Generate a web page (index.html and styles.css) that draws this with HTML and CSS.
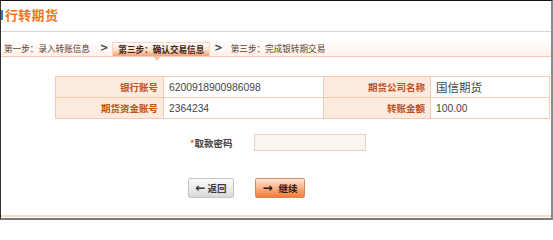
FILE: index.html
```html
<!DOCTYPE html>
<html>
<head>
<meta charset="utf-8">
<link rel="stylesheet" href="styles.css">
</head>
<body>
<div class="frame">
  <div class="title-bar"><span class="title-icon"></span><h1 class="title">行转期货</h1></div>
  <div class="steps">
    <span class="step">第一步：录入转账信息</span>
    <span class="sep sep1">&gt;</span>
    <span class="step active">第三步：确认交易信息</span>
    <span class="sep sep2">&gt;</span>
    <span class="step">第三步：完成银转期交易</span>
  </div>
  <table class="info">
    <tr>
      <th class="c1">银行账号</th><td class="c2 num">6200918900986098</td>
      <th class="c3">期货公司名称</th><td class="c4 big">国信期货</td>
    </tr>
    <tr>
      <th>期货资金账号</th><td class="num">2364234</td>
      <th>转账金额</th><td class="num">100.00</td>
    </tr>
  </table>
  <div class="pwd-row">
    <label class="pwd-label"><span class="req">*</span>取款密码</label>
    <span class="pwd-input"></span>
  </div>
  <div class="btn-row">
    <span class="btn back"><span class="arr">←</span>返回</span>
    <span class="btn go"><span class="arr">→</span>继续</span>
  </div>
  <div class="spacer"></div>
  <div class="foot-line"></div>
</div>
</body>
</html>
```

FILE: styles.css
```css
html, body { margin: 0; padding: 0; background: #fff; }
.frame {
  box-sizing: border-box;
  width: 553px;
  height: 220px;
  border-top: 1px solid #111;
  border-left: 1px solid #333;
  border-right: 2px solid #8a8a8a;
  border-bottom: 2px solid #7a7a7a;
  display: flex;
  flex-direction: column;
  font-family: "Noto Sans CJK SC", "DejaVu Sans", sans-serif;
  overflow: hidden;
}
.title-bar {
  height: 30px;
  border-bottom: 1px solid #d6d6d6;
  display: flex;
  align-items: center;
}
.title-icon {
  width: 2px; height: 10px; background: #3a78c8; margin-top: -3px;
}
.title {
  margin: -3px 0 0 2px;
  font-size: 13px;
  font-weight: bold;
  color: #f4761b;
  letter-spacing: 0.3px;
}
.steps {
  margin-top: 8px;
  height: 16px;
  border-bottom: 1px solid #f3c7ae;
  background: linear-gradient(to bottom, #fff 0%, #fdf1ea 100%);
  display: flex;
  align-items: flex-end;
  font-size: 8.6px;
  color: #5b3a2c;
  padding-left: 3px;
}
.step { height: 15px; line-height: 14px; white-space: nowrap; }
.sep { font-family: "DejaVu Sans", sans-serif; font-size: 10px; font-weight: bold; height: 15px; line-height: 14px; color: #444; }
.sep1 { margin: 0 4px 0 10px; }
.sep2 { margin: 0 8px 0 4px; }
.step.active {
  position: relative;
  padding: 0 5px;
  height: 13px;
  line-height: 13px;
  font-weight: bold;
  color: #3a2418;
  border: 1px solid #f7d6c4;
  border-bottom: none;
  background: linear-gradient(to bottom, #fff 0%, #fde2d2 50%, #f8a070 100%);
}
.step.active::after {
  content: "";
  position: absolute;
  left: 40px;
  bottom: -5px;
  border-left: 4px solid transparent;
  border-right: 4px solid transparent;
  border-top: 5px solid #f7c2a5;
}
.info {
  margin: 19px 0 0 54px;
  border-collapse: collapse;
  width: 495px;
  table-layout: fixed;
}
.info th, .info td {
  border: 1px solid #f1cbb4;
  height: 20px;
  padding: 0;
}
.info th {
  background: #fdeade;
  color: #bf4e18;
  font-size: 9.5px;
  font-weight: bold;
  text-align: right;
  padding-right: 5px;
}
.info td { padding-left: 5px; color: #444; }
.c1 { width: 102px; }
.c2 { width: 154px; }
.c3 { width: 101px; }
.num { font-family: "Liberation Sans", sans-serif; font-size: 10.3px; color: #505050; }
.big { font-size: 11.5px; color: #333; }
.pwd-row {
  margin-top: 15px;
  display: flex;
  align-items: center;
  padding-left: 189px;
}
.pwd-label {
  width: 64px;
  font-size: 9.5px;
  font-weight: bold;
  color: #444;
}
.req { color: #e8632a; font-size: 9px; }
.pwd-input {
  box-sizing: border-box;
  width: 112px;
  height: 17px;
  background: #fbf5f2;
  border: 1px solid #f0d2c0;
}
.btn-row {
  margin-top: 27px;
  display: flex;
  padding-left: 187px;
  gap: 21px;
}
.btn {
  box-sizing: border-box;
  height: 20px;
  display: flex;
  align-items: center;
  justify-content: center;
  font-size: 9.5px;
  font-weight: bold;
  color: #3a3a3a;
  border-radius: 2px;
}
.btn .arr { font-family: "DejaVu Sans", sans-serif; font-size: 12px; font-weight: bold; margin-right: 2px; }
.back {
  width: 46px;
  border: 1px solid #c4c4c4;
  background: linear-gradient(to bottom, #fafafa 0%, #ececec 50%, #d8d8d8 100%);
}
.go {
  width: 50px;
  border: 1px solid #d08a62;
  background: linear-gradient(to bottom, #fee6d6 0%, #fbb58c 45%, #f57a35 100%);
  color: #2a1a10;
}
.go .arr { margin-right: 6px; }
.spacer { flex: 1; }
.foot-line { height: 2px; background: #f7dccd; margin-bottom: 1px; }
```
